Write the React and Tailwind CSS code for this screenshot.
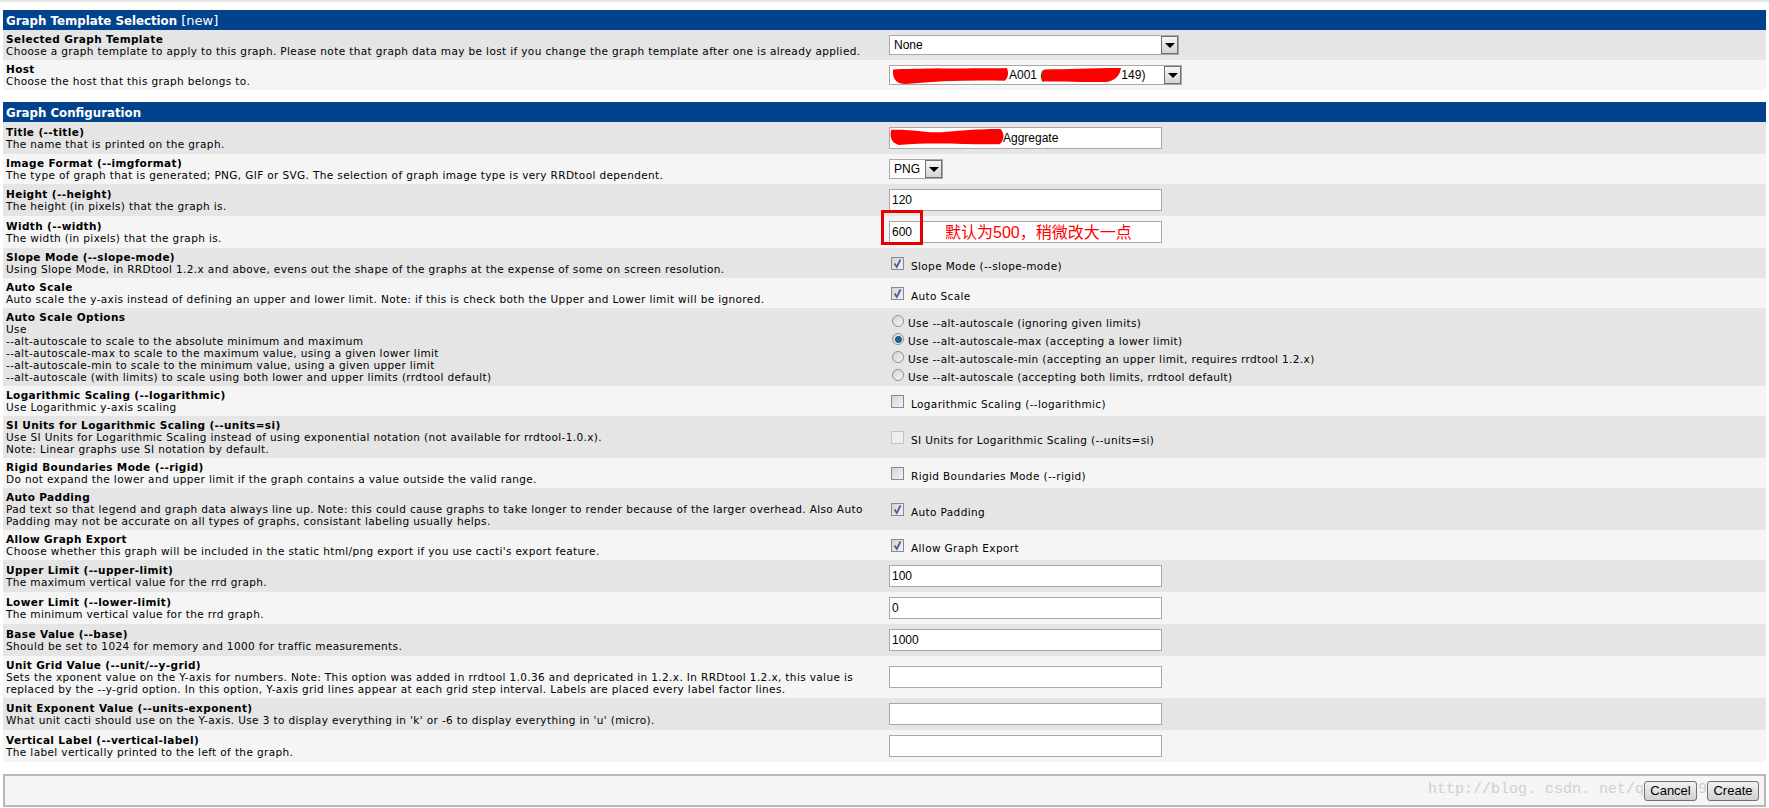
import React from "react";

const Blob = ({ className, d }) => (
    <svg className={className} viewBox="0 0 100 20" preserveAspectRatio="none">
        <path d={d} fill="#ff0000" />
    </svg>
);

const Check = ({ checked, disabled }) => (
    <span className={`relative shrink-0 w-[13px] h-[13px] border ${disabled ? "border-[#c4c4c4] bg-[#eeeeee]" : "border-[#8a8a8a] bg-linear-to-br from-[#d4d4d4] to-[#f4f4f4]"}`}>
        {checked && (
            <svg className="absolute left-0 top-0 w-[11px] h-[11px]" viewBox="0 0 11 11">
                <path d="M2.5 5.5 L4.8 9 L8.5 1.5" fill="none" stroke="#4a5c9e" strokeWidth="1.8" />
            </svg>
        )}
    </span>
);

const CheckRow = ({ label, checked, disabled }) => (
    <div className="flex items-center gap-[7px] pl-[2px]">
        <Check checked={checked} disabled={disabled} />
        <span className="relative top-[3px] whitespace-nowrap">{label}</span>
    </div>
);

const Radio = ({ label, checked }) => (
    <div className="flex items-center h-[18px] pl-[3px] gap-[4px]">
        <span className="relative top-[1px] flex items-center justify-center shrink-0 w-[12px] h-[12px] rounded-full border border-[#8f8f8f] bg-linear-to-br from-[#d2d2d2] to-[#f6f6f6]">
            {checked && <span className="w-[7px] h-[7px] rounded-full bg-[#0b6fa8] border border-[#0a3f60]"></span>}
        </span>
        <span className="relative top-[3px] whitespace-nowrap">{label}</span>
    </div>
);

const Arrow = () => (
    <span className="flex items-center justify-center w-[17px] h-[18px] border border-[#707070] bg-linear-to-b from-[#f6f6f6] to-[#d4d4d4]">
        <span className="w-0 h-0 border-l-[5px] border-r-[5px] border-t-[5px] border-l-transparent border-r-transparent border-t-black"></span>
    </span>
);

const Select = ({ className, children }) => (
    <div className={`relative flex items-center justify-between h-[20px] border border-[#a8a8a8] bg-white pl-[4px] text-[12px] tracking-normal font-['Liberation_Sans',sans-serif] ${className}`}>
        <span className="whitespace-nowrap">{children}</span>
        <Arrow />
    </div>
);

const Input = ({ value }) => (
    <input
        readOnly
        value={value}
        className="block w-[273px] h-[22px] border border-[#a8a8a8] bg-white px-[2px] text-[12px] tracking-normal font-['Liberation_Sans',sans-serif] text-black outline-none"
    />
);

const Row = ({ title, lines, alt, children }) => (
    <div className={`flex items-center ${alt ? "bg-[#f5f5f5]" : "bg-[#e5e5e5]"}`}>
        <div className="w-[886px] shrink-0 pl-[3px] py-[3px]">
            <div className="font-bold whitespace-nowrap">{title}</div>
            {lines.map((l, i) => (
                <div key={i} className="whitespace-nowrap">{l}</div>
            ))}
        </div>
        <div className="relative">{children}</div>
    </div>
);

const Header = ({ children }) => (
    <div className="h-[20px] flex items-center bg-[#00438c] text-white pl-[3px] pt-[1px] text-[13px] tracking-normal whitespace-nowrap">
        {children}
    </div>
);

export default function App() {
    return (
        <div className="relative h-[808px] overflow-hidden bg-white text-[10.5px] tracking-[0.37px] leading-[12px] text-black font-['DejaVu_Sans',Verdana,sans-serif]">
            <div className="h-[3px] bg-linear-to-b from-[#dddddd] to-white"></div>
            <div className="px-[3px] pt-[7px]">
                <Header><b className="text-[11.8px]">Graph Template Selection</b>&nbsp;[new]</Header>
                <Row title="Selected Graph Template" lines={["Choose a graph template to apply to this graph. Please note that graph data may be lost if you change the graph template after one is already applied."]}>
                    <Select className="w-[290px]">None</Select>
                </Row>
                <Row alt title="Host" lines={["Choose the host that this graph belongs to."]}>
                    <Select className="w-[293px]">
                        <span className="ml-[115px]">A001 (</span>
                        <span className="ml-[77px]">149)</span>
                    </Select>
                    <Blob className="absolute left-[3px] top-[3px] w-[116px] h-[16px]" d="M1 2 C20 0 60 1 99 0 C101 6 100 13 97 16 C70 15 40 16 12 20 C3 20 0 12 1 2 Z" />
                    <Blob className="absolute left-[153px] top-[3px] w-[79px] h-[14px]" d="M3 2 C30 2 60 0 100 0 C99 9 94 18 82 20 C50 20 25 20 1 19 C-1 12 0 7 3 2 Z" />
                </Row>

                <div className="h-[12px]"></div>

                <Header><b className="text-[11.8px]">Graph Configuration</b></Header>
                <Row title="Title (--title)" lines={["The name that is printed on the graph."]}>
                    <div className="py-[5px]">
                        <div className="relative">
                            <input readOnly value="Aggregate" className="block w-[273px] h-[22px] border border-[#a8a8a8] bg-white pl-[113px] text-[12px] tracking-normal font-['Liberation_Sans',sans-serif] text-black outline-none" />
                            <Blob className="absolute left-[1px] top-[2px] w-[114px] h-[16px]" d="M1 1 C20 0 30 5 45 4 C60 3 70 0 97 0 C101 6 100 15 96 19 C70 20 40 16 8 20 C0 17 0 8 1 1 Z" />
                        </div>
                    </div>
                </Row>
                <Row alt title="Image Format (--imgformat)" lines={["The type of graph that is generated; PNG, GIF or SVG. The selection of graph image type is very RRDtool dependent."]}>
                    <Select className="w-[54px]">PNG</Select>
                </Row>
                <Row title="Height (--height)" lines={["The height (in pixels) that the graph is."]}>
                    <div className="py-[5px]"><Input value="120" /></div>
                </Row>
                <Row alt title="Width (--width)" lines={["The width (in pixels) that the graph is."]}>
                    <div className="py-[5px]">
                        <div className="relative">
                            <Input value="600" />
                            <span className="absolute left-[56px] top-[2px] text-[16px] tracking-normal leading-[20px] text-[#ff0000] whitespace-nowrap font-['Liberation_Sans','Noto_Sans_CJK_SC',sans-serif]">默认为500，稍微改大一点</span>
                            <div className="absolute left-[-8px] top-[-11px] w-[42px] h-[35px] border-[3px] border-[#e60000]"></div>
                        </div>
                    </div>
                </Row>
                <Row title="Slope Mode (--slope-mode)" lines={["Using Slope Mode, in RRDtool 1.2.x and above, evens out the shape of the graphs at the expense of some on screen resolution."]}>
                    <CheckRow checked label="Slope Mode (--slope-mode)" />
                </Row>
                <Row alt title="Auto Scale" lines={["Auto scale the y-axis instead of defining an upper and lower limit. Note: if this is check both the Upper and Lower limit will be ignored."]}>
                    <CheckRow checked label="Auto Scale" />
                </Row>
                <Row title="Auto Scale Options" lines={["Use", "--alt-autoscale to scale to the absolute minimum and maximum", "--alt-autoscale-max to scale to the maximum value, using a given lower limit", "--alt-autoscale-min to scale to the minimum value, using a given upper limit", "--alt-autoscale (with limits) to scale using both lower and upper limits (rrdtool default)"]}>
                    <div className="pt-[3px] pb-[3px]">
                        <Radio label="Use --alt-autoscale (ignoring given limits)" />
                        <Radio checked label="Use --alt-autoscale-max (accepting a lower limit)" />
                        <Radio label="Use --alt-autoscale-min (accepting an upper limit, requires rrdtool 1.2.x)" />
                        <Radio label="Use --alt-autoscale (accepting both limits, rrdtool default)" />
                    </div>
                </Row>
                <Row alt title="Logarithmic Scaling (--logarithmic)" lines={["Use Logarithmic y-axis scaling"]}>
                    <CheckRow label="Logarithmic Scaling (--logarithmic)" />
                </Row>
                <Row title="SI Units for Logarithmic Scaling (--units=si)" lines={["Use SI Units for Logarithmic Scaling instead of using exponential notation (not available for rrdtool-1.0.x).", "Note: Linear graphs use SI notation by default."]}>
                    <CheckRow disabled label="SI Units for Logarithmic Scaling (--units=si)" />
                </Row>
                <Row alt title="Rigid Boundaries Mode (--rigid)" lines={["Do not expand the lower and upper limit if the graph contains a value outside the valid range."]}>
                    <CheckRow label="Rigid Boundaries Mode (--rigid)" />
                </Row>
                <Row title="Auto Padding" lines={["Pad text so that legend and graph data always line up. Note: this could cause graphs to take longer to render because of the larger overhead. Also Auto", "Padding may not be accurate on all types of graphs, consistant labeling usually helps."]}>
                    <CheckRow checked label="Auto Padding" />
                </Row>
                <Row alt title="Allow Graph Export" lines={["Choose whether this graph will be included in the static html/png export if you use cacti's export feature."]}>
                    <CheckRow checked label="Allow Graph Export" />
                </Row>
                <Row title="Upper Limit (--upper-limit)" lines={["The maximum vertical value for the rrd graph."]}>
                    <div className="py-[5px]"><Input value="100" /></div>
                </Row>
                <Row alt title="Lower Limit (--lower-limit)" lines={["The minimum vertical value for the rrd graph."]}>
                    <div className="py-[5px]"><Input value="0" /></div>
                </Row>
                <Row title="Base Value (--base)" lines={["Should be set to 1024 for memory and 1000 for traffic measurements."]}>
                    <div className="py-[5px]"><Input value="1000" /></div>
                </Row>
                <Row alt title="Unit Grid Value (--unit/--y-grid)" lines={["Sets the xponent value on the Y-axis for numbers. Note: This option was added in rrdtool 1.0.36 and depricated in 1.2.x. In RRDtool 1.2.x, this value is", "replaced by the --y-grid option. In this option, Y-axis grid lines appear at each grid step interval. Labels are placed every label factor lines."]}>
                    <Input value="" />
                </Row>
                <Row title="Unit Exponent Value (--units-exponent)" lines={["What unit cacti should use on the Y-axis. Use 3 to display everything in 'k' or -6 to display everything in 'u' (micro)."]}>
                    <div className="py-[5px]"><Input value="" /></div>
                </Row>
                <Row alt title="Vertical Label (--vertical-label)" lines={["The label vertically printed to the left of the graph."]}>
                    <div className="py-[5px]"><Input value="" /></div>
                </Row>

                <div className="relative mt-[12px] h-[33px] flex items-center justify-end gap-[10px] pr-[5px] border-2 border-[#b8b8b8] bg-[#f5f5f5]">
                    <span className="absolute left-[1423px] top-[5px] text-[15px] tracking-normal leading-[18px] text-[#d0d0ca] whitespace-nowrap font-['Liberation_Mono',monospace]">http://blog. csdn. net/qq_3415951706</span>
                    <button className="relative w-[53px] h-[20px] rounded-[3px] border border-[#707070] bg-linear-to-b from-[#f2f2f2] to-[#d0d0d0] text-[13px] tracking-normal leading-[16px] font-['Liberation_Sans',sans-serif]">Cancel</button>
                    <button className="relative w-[52px] h-[20px] rounded-[3px] border border-[#707070] bg-linear-to-b from-[#f2f2f2] to-[#d0d0d0] text-[13px] tracking-normal leading-[16px] font-['Liberation_Sans',sans-serif]">Create</button>
                </div>
            </div>
        </div>
    );
}
